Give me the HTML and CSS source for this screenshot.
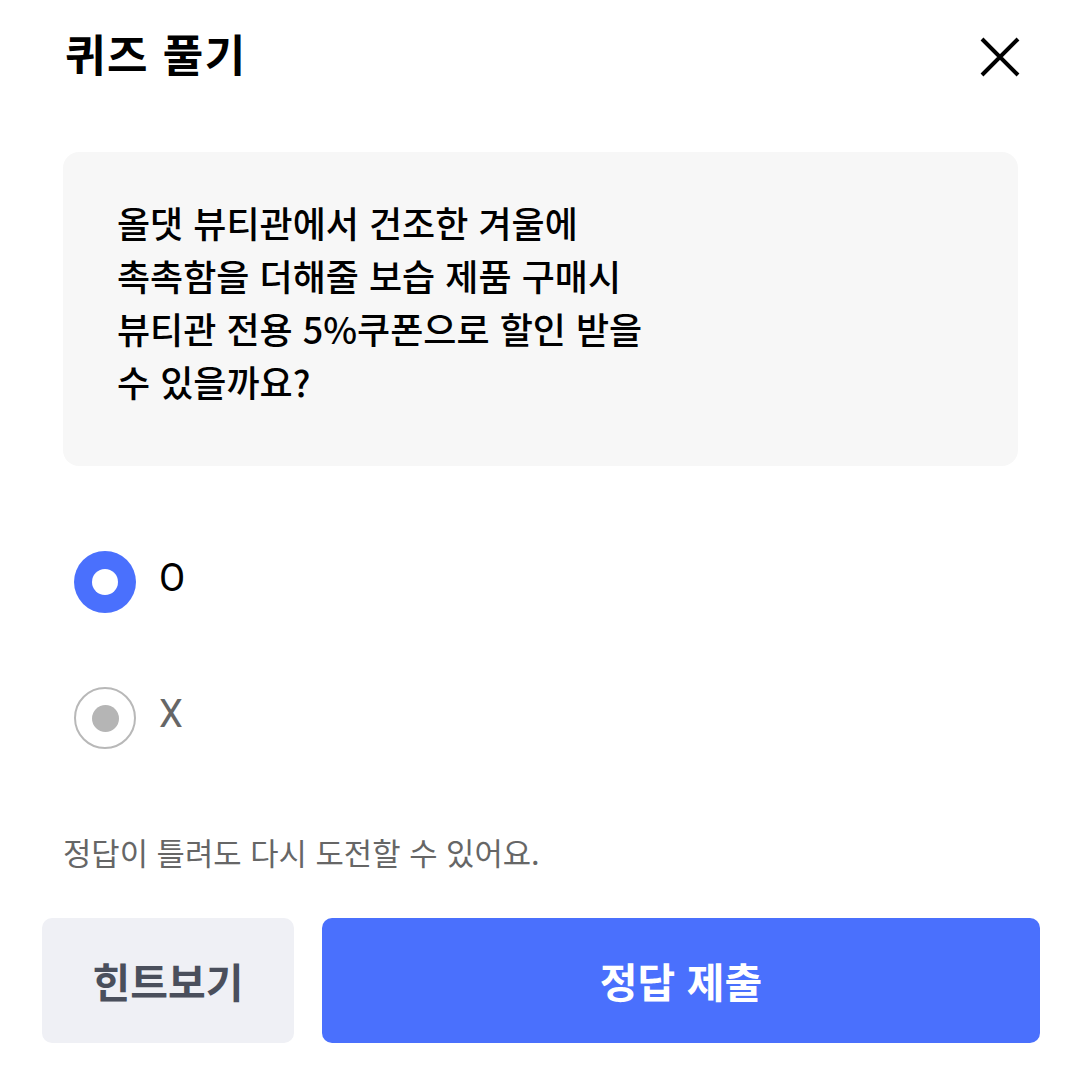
FILE: index.html
```html
<!DOCTYPE html>
<html lang="ko">
<head>
<meta charset="utf-8">
<link rel="stylesheet" href="styles.css">
</head>
<body>
<div class="page">
  <header class="header">
    <h1 class="title">퀴즈 풀기</h1>
    <button class="close" aria-label="닫기">
      <svg width="40" height="40" viewBox="0 0 40 40"><path d="M2 2 L38 38 M38 2 L2 38" stroke="#000" stroke-width="4" fill="none"/></svg>
    </button>
  </header>
  <section class="question">
    <p class="q-text">올댓 뷰티관에서 건조한 겨울에<br>촉촉함을 더해줄 보습 제품 구매시<br>뷰티관 전용 5%쿠폰으로 할인 받을<br>수 있을까요?</p>
  </section>
  <div class="options">
    <label class="option selected"><span class="radio"><span class="dot"></span></span><span class="opt-label">O</span></label>
    <label class="option"><span class="radio"><span class="dot"></span></span><span class="opt-label">X</span></label>
  </div>
  <p class="note">정답이 틀려도 다시 도전할 수 있어요.</p>
  <div class="actions">
    <button class="btn btn-hint">힌트보기</button>
    <button class="btn btn-submit">정답 제출</button>
  </div>
</div>
</body>
</html>
```

FILE: styles.css
```css
* { box-sizing: border-box; }
html, body { margin: 0; padding: 0; background: #fff; }
body {
  font-family: "Noto Sans CJK KR", "Noto Sans", sans-serif;
  color: #000;
  width: 1080px;
}
.page { padding: 0; }
.header {
  display: flex;
  justify-content: space-between;
  align-items: center;
  height: 112px;
  padding: 0 60px 0 65px;
}
.title {
  margin: 0;
  font-size: 44px;
  font-weight: 700;
  letter-spacing: 1.5px;
  line-height: 1;
  margin-top: -6px;
}
.close {
  border: 0;
  background: none;
  padding: 0;
  width: 40px;
  height: 40px;
  margin-top: 2px;
}
.close svg { display: block; }
.question {
  margin: 40px 62px 0 63px;
  background: #f7f7f7;
  border-radius: 16px;
  height: 314px;
  padding: 44px 54px;
}
.q-text {
  margin: 0;
  font-size: 36px;
  font-weight: 500;
  line-height: 53px;
  letter-spacing: 0;
}
.options {
  display: flex;
  flex-direction: column;
  gap: 74px;
  margin: 85px 0 0 74px;
}
.option {
  display: flex;
  align-items: center;
  gap: 23px;
  height: 62px;
}
.radio {
  width: 62px;
  height: 62px;
  border-radius: 50%;
  display: flex;
  align-items: center;
  justify-content: center;
  border: 2px solid #b8b8b8;
  background: #fff;
}
.radio .dot {
  width: 27px;
  height: 27px;
  border-radius: 50%;
  background: #b5b5b5;
}
.option.selected .radio {
  border: 0;
  background: #4a70fd;
}
.option.selected .dot {
  background: #fff;
  width: 26px;
  height: 26px;
}
.opt-label {
  font-family: "Roboto", "Noto Sans", sans-serif;
  font-size: 38px;
  color: #000;
  margin-top: -8px;
}
.option:not(.selected) .opt-label { color: #666; }
.note {
  margin: 85px 0 0 63px;
  font-size: 30.8px;
  color: #666;
  letter-spacing: 0;
  line-height: 1.2;
}
.actions {
  display: flex;
  gap: 28px;
  margin: 47px 40px 0 42px;
}
.btn {
  border: 0;
  height: 125px;
  border-radius: 10px;
  font-family: "Noto Sans CJK KR", "Noto Sans", sans-serif;
  font-size: 41px;
  font-weight: 700;
  letter-spacing: 0;
}
.btn-hint {
  width: 252px;
  background: #eff0f5;
  color: #4a4f5c;
}
.btn-submit {
  flex: 1;
  background: #4a70fd;
  color: #fff;
}
```
